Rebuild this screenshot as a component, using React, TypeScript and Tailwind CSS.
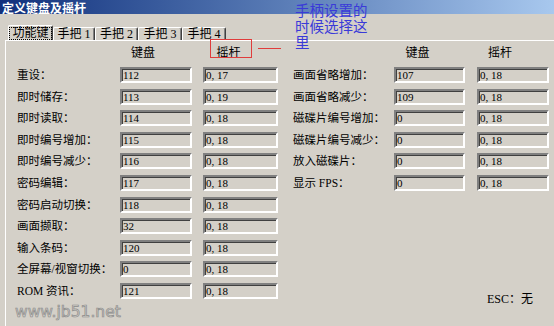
import React from "react";

const FONT = '"Liberation Serif", "Noto Sans CJK SC", serif';
const CJK = '"Noto Sans CJK SC", "Liberation Sans", sans-serif';

type Row = { label: string; k: string; j: string };

const left: Row[] = [
  { label: "重设：", k: "112", j: "0, 17" },
  { label: "即时储存：", k: "113", j: "0, 19" },
  { label: "即时读取：", k: "114", j: "0, 18" },
  { label: "即时编号增加：", k: "115", j: "0, 18" },
  { label: "即时编号减少：", k: "116", j: "0, 18" },
  { label: "密码编辑：", k: "117", j: "0, 18" },
  { label: "密码启动切换：", k: "118", j: "0, 18" },
  { label: "画面撷取：", k: "32", j: "0, 18" },
  { label: "输入条码：", k: "120", j: "0, 18" },
  { label: "全屏幕/视窗切换：", k: "0", j: "0, 18" },
  { label: "ROM 资讯：", k: "121", j: "0, 18" },
];

const right: Row[] = [
  { label: "画面省略增加：", k: "107", j: "0, 18" },
  { label: "画面省略减少：", k: "109", j: "0, 18" },
  { label: "磁碟片编号增加：", k: "0", j: "0, 18" },
  { label: "磁碟片编号减少：", k: "0", j: "0, 18" },
  { label: "放入磁碟片：", k: "0", j: "0, 18" },
  { label: "显示 FPS：", k: "0", j: "0, 18" },
];

function Field({ value, w }: { value: string; w: string }) {
  return (
    <div
      className={`${w} h-[16px] border-2 border-t-[#808080] border-l-[#808080] border-b-white border-r-white bg-[#d4d0c8] shadow-[inset_1px_1px_0_#404040] pl-[1px] text-[11px] leading-[12px] text-black flex items-center`}
      style={{ fontFamily: FONT }}
    >
      {value}
    </div>
  );
}

function Tab({ label, w, active }: { label: string; w: string; active?: boolean }) {
  return (
    <div
      className={`${w} ${active ? "h-[15px]" : "h-[13px]"} border-t border-l border-white border-r border-r-[#404040] shadow-[inset_-1px_0_0_#808080] rounded-t-[2px] flex items-center justify-center text-[12px] text-black`}
      style={{ fontFamily: FONT }}
    >
      {active ? (
        <span className="border border-dotted border-black px-[2px] leading-[11px]">{label}</span>
      ) : (
        <span className="leading-[12px] whitespace-pre">{label}</span>
      )}
    </div>
  );
}

export default function App() {
  return (
    <div className="w-[554px] h-[326px] bg-[#d4d0c8] relative overflow-hidden">
      <div
        className="h-[14px] bg-gradient-to-r from-[#12307c] to-[#a8c8ee] pl-[2px] pt-[1px] text-white font-bold text-[12px] leading-[13px]"
        style={{ fontFamily: CJK }}
      >
        定义键盘及摇杆
      </div>

      <div className="mt-[11px] pl-[8px] flex items-end h-[15px]">
        <Tab label="功能键" w="w-[45px]" active />
        <Tab label="手把 1" w="w-[42px]" />
        <Tab label="手把 2" w="w-[43px]" />
        <Tab label="手把 3" w="w-[44px]" />
        <Tab label="手把 4" w="w-[44px]" />
      </div>

      <div className="ml-[5px] border-t border-l border-white h-[300px] pl-[11px] flex" style={{ fontFamily: FONT }}>
        <div className="flex flex-col">
          <div className="mt-[5px] h-[14px] flex text-[12px] leading-[14px] text-black">
            <div className="w-[103px]" />
            <div className="w-[72px] pr-[26px] text-center">键盘</div>
            <div className="w-[75px] ml-[11px] pr-[24px] text-center">摇杆</div>
          </div>
          <div className="mt-[7px] flex flex-col gap-[5.6px]">
            {left.map((r) => (
              <div key={r.label} className="flex items-center h-[16px]">
                <div className="w-[103px] text-[11.5px] leading-[14px] text-black whitespace-nowrap">{r.label}</div>
                <Field value={r.k} w="w-[72px]" />
                <div className="w-[11px]" />
                <Field value={r.j} w="w-[75px]" />
              </div>
            ))}
          </div>
          <div
            className="mt-[4px] -ml-[2px] text-[15.5px] leading-[18px] text-[#d0cdc6] [-webkit-text-stroke:0.7px_#8c8c8c]"
            style={{ fontFamily: '"DejaVu Sans", sans-serif' }}
          >
            www.jb51.net
          </div>
        </div>

        <div className="ml-[15px] flex flex-col">
          <div className="mt-[5px] h-[14px] flex text-[12px] leading-[14px] text-black">
            <div className="w-[101px]" />
            <div className="w-[71px] pr-[24px] text-center">键盘</div>
            <div className="w-[72px] ml-[12px] pr-[26px] text-center">摇杆</div>
          </div>
          <div className="mt-[7px] flex flex-col gap-[5.6px]">
            {right.map((r) => (
              <div key={r.label} className="flex items-center h-[16px]">
                <div className="w-[101px] text-[11.5px] leading-[14px] text-black whitespace-nowrap">{r.label}</div>
                <Field value={r.k} w="w-[71px]" />
                <div className="w-[12px]" />
                <Field value={r.j} w="w-[72px]" />
              </div>
            ))}
          </div>
          <div className="mt-[101px] self-end mr-[16px] text-[12px] leading-[14px] text-black">ESC：无</div>
        </div>
      </div>

      {/* annotations */}
      <div className="absolute left-[210px] top-[39px] w-[42px] h-[19px] border-[1.5px] border-[#e03c3c]" />
      <div className="absolute left-[258px] top-[48px] w-[23px] h-[1px] bg-[#e03c3c]" />
      <div
        className="absolute left-[295px] top-[2px] flex flex-col text-[14.5px] text-[#3a3ad8]"
        style={{ fontFamily: CJK }}
      >
        <div className="h-[16px] leading-[16px]">手柄设置的</div>
        <div className="h-[16px] leading-[16px]">时候选择这</div>
        <div className="h-[16px] leading-[16px]">里</div>
      </div>
    </div>
  );
}
